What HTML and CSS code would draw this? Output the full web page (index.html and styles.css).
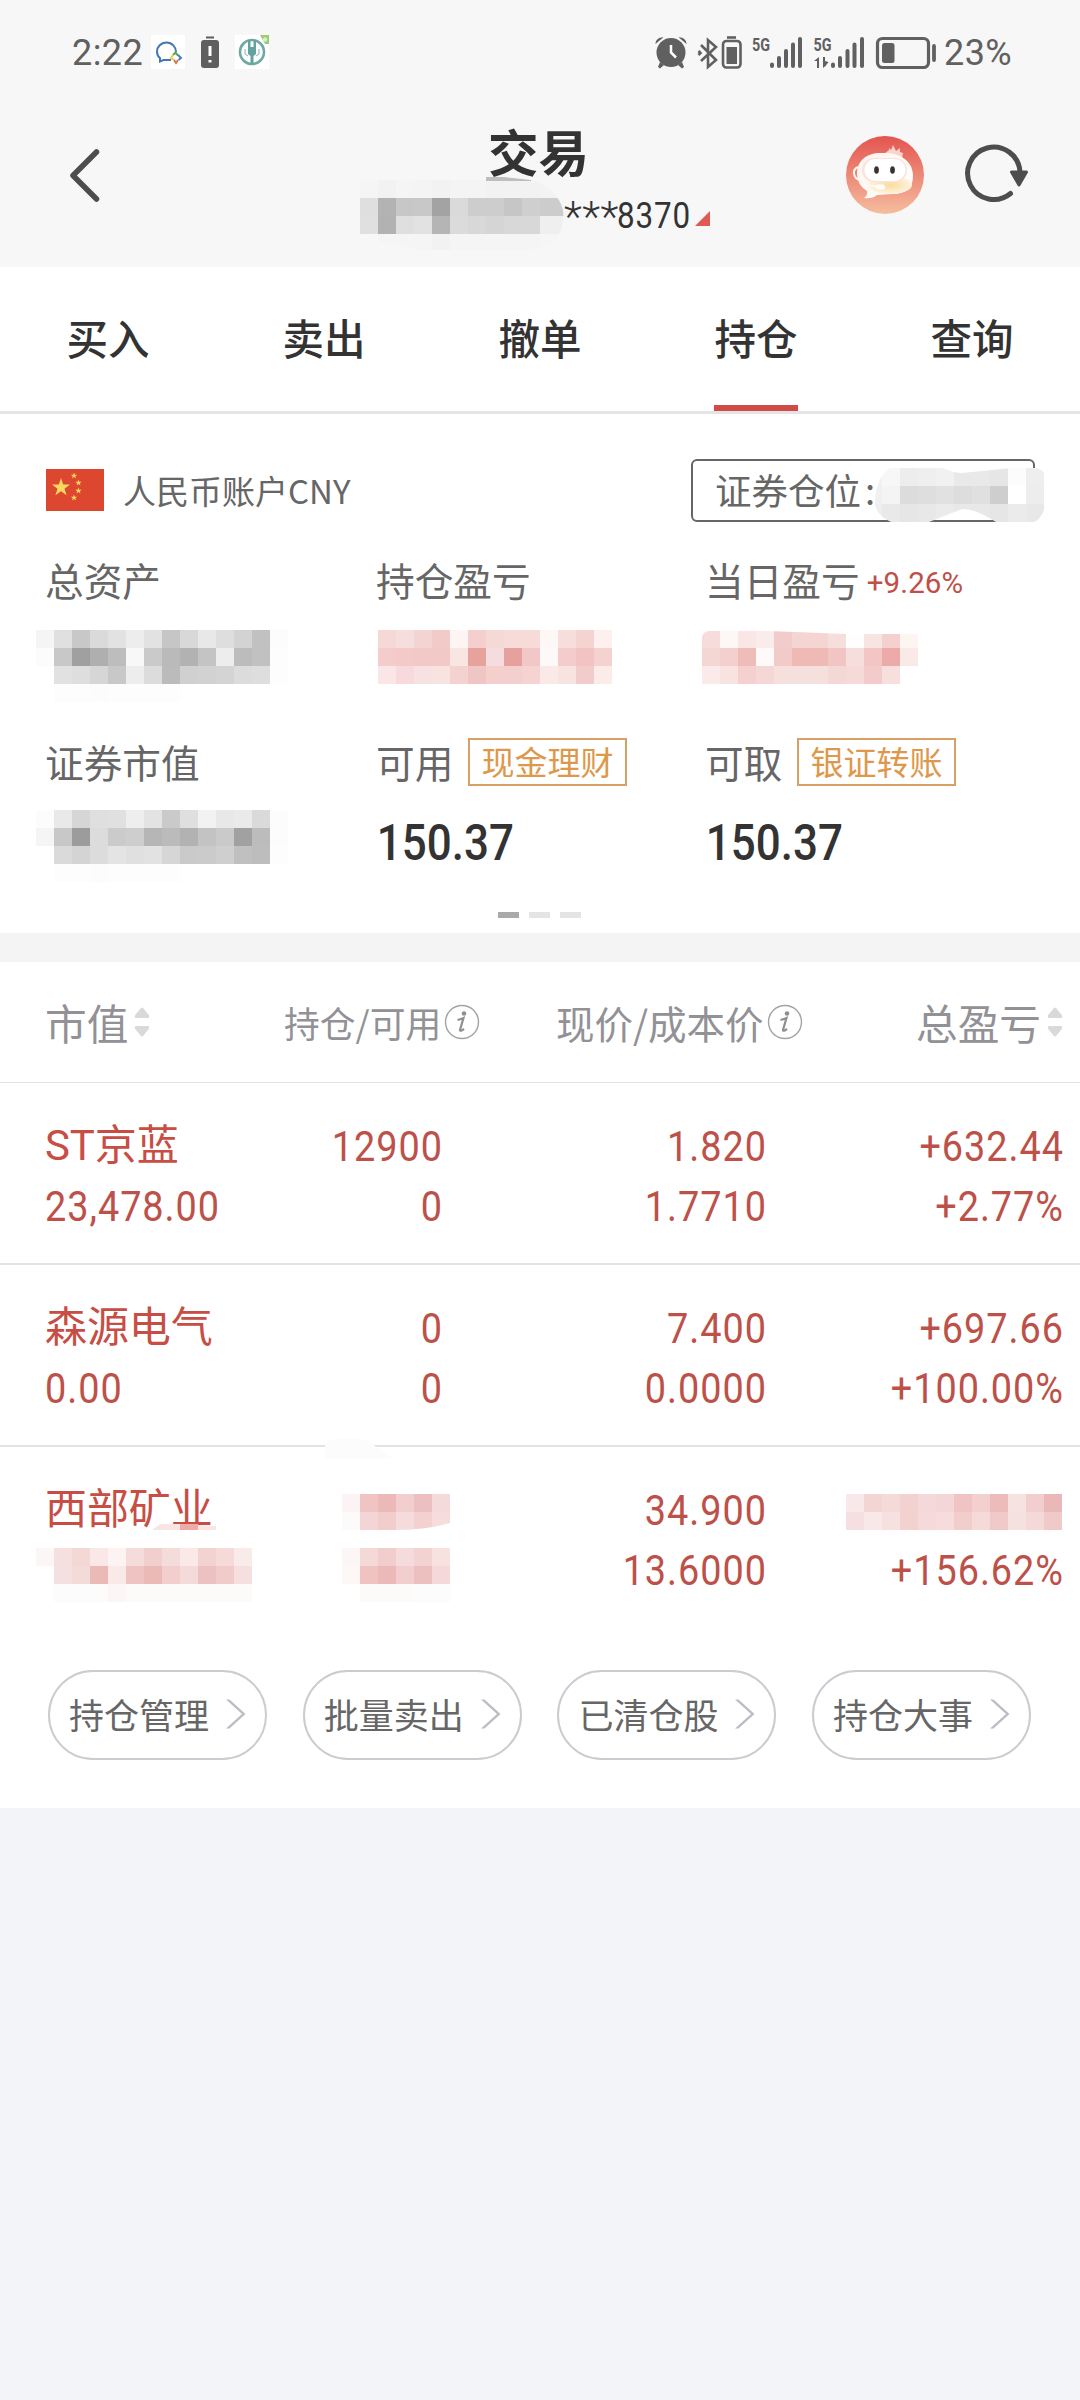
FILE: index.html
```html
<!DOCTYPE html>
<html lang="zh-CN">
<head>
<meta charset="utf-8">
<title>交易 - 持仓</title>
<link rel="stylesheet" href="styles.css">
</head>
<body>
<header class="top">
  <div class="status">
    <span class="clock">2:22</span>
    <svg class="notif-icons" width="120" height="36" viewBox="150 34 120 36" fill="none">
      <path fill="#fff" d="M151 35h34v34h-34zM235 35h34v34h-34z"/>
      <path d="M176 52c0-5-4-9.500-9.500-9.500S157 47 157 51.500c0 3 1 5 3 6.500v3.500l3.500-1.500h7.500" stroke="#4478b4" stroke-width="2"/>
      <path d="m173 55 2.500-2.500 2.500 3" stroke="#65a352" stroke-width="2"/>
      <path d="m178 55 3 3-2.500 2" stroke="#4280bd" stroke-width="2"/>
      <path d="m178 60-2 3-2-3" stroke="#d9764b" stroke-width="2"/>
      <path d="m174 60-3-2 2-3" stroke="#ecca5d" stroke-width="2"/>
      <path fill="#5f5f5f" d="M206 36.500h8v2h-8zM204 40h12a3 3 0 0 1 3 3v22a3 3 0 0 1-3 3h-12a3 3 0 0 1-3-3V43a3 3 0 0 1 3-3z"/>
      <path d="M210 46v10M210 60v2.500" stroke="#fff" stroke-width="3"/>
      <circle cx="252" cy="52" r="12" stroke="#6fa9a3" stroke-width="2.600"/>
      <path fill="#62a39d" d="M248 40h2.500v7h3v-7h2.500v14l-2.500 2v8h-3v-8l-2.500-2z"/>
      <path d="M245 49v5l3 2M259 49v5l-3 2" stroke="#7bb5ae"/>
      <path fill="#9fca77" d="M260 35h9v9h-4z"/>
      <circle cx="265" cy="39.500" r="2.200" fill="#d9efc5"/>
    </svg>
    <svg class="system-icons" width="284" height="36" viewBox="654 34 284 36" fill="none" stroke="#606060">
      <g stroke="none" fill="#606060">
        <circle cx="671" cy="52.500" r="14.500"/>
        <path d="M655.500 44c0-4 3-7 8-6.800zM686.500 44c0-4-3-7-8-6.800zM660 62l4 3-4 3.500-2-1.500zM682 62l-4 3 4 3.500 2-1.500z"/>
      </g>
      <path stroke="#fff" stroke-width="2.500" d="M671 45v7.500l5 5"/>
      <path stroke-width="2.600" d="m701 45 15 15-8 7V40l8 7-15 14M698.500 51l2 2-2 2"/>
      <path stroke-width="2.600" d="M727 37.500h9"/>
      <rect x="723" y="41" width="17.500" height="26.500" rx="3.500" stroke-width="2.600"/>
      <path stroke="none" fill="#606060" d="M726.500 47h10.500v17h-10.500z"/>
      <g stroke-width="4" stroke-linecap="round">
        <path d="M772 64.500v1.500M779 58v8M786 51v15M793 44.500v21.500M800 39v27"/>
        <path d="M833 64.500v1.500M840 58v8M847.500 51v15M854.500 44.500v21.500M862 39v27"/>
      </g>
      <path stroke="none" fill="#606060" d="M819 57v11h-2v-7h-3zM823 68V57h2v4l3.500 1-3 4z"/>
      <rect x="877.500" y="38.500" width="51" height="29" rx="5" stroke-width="3.200"/>
      <rect x="882" y="43" width="12.500" height="20" rx="2.500" stroke="none" fill="#606060"/>
      <path stroke-width="3.800" stroke-linecap="round" d="M934 46v14"/>
      <g class="net"><text x="752" y="51" textLength="18" lengthAdjust="spacingAndGlyphs">5G</text><text x="813.500" y="51" textLength="18" lengthAdjust="spacingAndGlyphs">5G</text></g>
    </svg>
    <span class="percent">23%</span>
  </div>
  <div class="appbar">
    <svg class="back" width="34" height="60" viewBox="0 0 34 60"><path d="M28.500 7 5 30.500 28.500 54" fill="none" stroke="#4d4d4d" stroke-width="5.500" stroke-linecap="round" stroke-linejoin="round"/></svg>
    <div class="title">
      <h1>交易</h1>
      <div class="account">
        <svg class="mosaic" data-clip="M0 0H172Q197 8 203 30Q205 48 194 62L170 70H60L0 58Z" data-rows="f5f5f5 f2f2f2 f5f5f5 f4f4f4 f2f2f2 f4f4f4 f4f4f4 f2f2f2 f2f2f2 f2f2f2 f3f3f3 f7f7f7|dfdfdf b3b3b3 c7c7c7 c8c8c8 a3a3a3 dadada cdcdcd cdcdcd c6c6c6 cfcfcf cccccc cccccc|e0e0e0 b2b2b2 dfdfdf e2e2e2 b5b5b5 dbdbdb d8d8d8 d5d5d5 d8d8d8 d8d8d8 efefef efefef|f8f8f8 f5f5f5 f5f5f5 f5f5f5 f2f2f2 f5f5f5 f5f5f5 f5f5f5 f5f5f5 f5f5f5 f6f6f6 f7f7f7"></svg>
        <span class="stars">***</span><span class="tail">8370</span>
        <svg width="15" height="15" class="corner"><path fill="#df5a54" d="M15 0v15H0z"/></svg>
      </div>
      <svg class="smudge" width="46" height="4"><path fill="#bdbdbd" d="M0 0h18l27 3v1H0z"/></svg>
    </div>
    <svg class="robot" width="78" height="78" viewBox="0 0 78 78">
      <defs>
        <linearGradient id="rb" x2="0" y2="1"><stop offset="0" stop-color="#e45450"/><stop offset="1" stop-color="#f5bd9e"/></linearGradient>
        <linearGradient id="rf" y2=".8"><stop offset="0" stop-color="#fff3ee"/><stop offset=".6" stop-color="#fffaf5"/><stop offset="1" stop-color="#fff"/></linearGradient>
        <radialGradient id="rg"><stop offset="0" stop-color="#f9dc9b"/><stop offset="1" stop-color="#fff3df"/></radialGradient>
      </defs>
      <circle cx="39" cy="39" r="39" fill="url(#rb)"/>
      <path fill="#fbd5cc" d="m38 18 5-4v-2l2 2 2-5 3 6 4-3v4l3 1-1 5z"/>
      <path fill="url(#rf)" d="M18 62q4-3 3-7-10-6-10-17c0-13 9-21 24-21 18-1 32 7 32 23 0 13-8 18-20 18l-16 1q-5 4-13 3z"/>
      <ellipse cx="44" cy="49" rx="22" ry="9" fill="url(#rg)"/>
      <rect x="16" y="22" width="45" height="24" rx="12" fill="#fbe2dc"/>
      <rect x="18.500" y="23" width="41" height="22" rx="11" fill="#fff"/>
      <ellipse cx="30.500" cy="34" rx="2.400" ry="3.800" fill="#383230"/><ellipse cx="46.500" cy="34" rx="2.400" ry="3.800" fill="#383230"/>
      <path d="M12 31c-7 3-4 12 2 13 7 5 11 6 19 7" fill="none" stroke="#fff6ef" stroke-width="2"/>
      <rect x="30" y="48.500" width="9" height="5" rx="2.500" fill="#fff"/>
    </svg>
    <svg class="refresh" width="66" height="60" viewBox="0 0 66 60"><path d="M46.500 49.500A26.200 26.200 0 1 1 56 28" fill="none" stroke="#4d4d4d" stroke-width="5" stroke-linecap="round"/><path d="M47.500 28h15l-7.500 13z" fill="#4d4d4d" stroke="#4d4d4d" stroke-width="3" stroke-linejoin="round"/></svg>
  </div>
</header>

<nav class="tabs">
  <a>买入</a><a>卖出</a><a>撤单</a><a class="active">持仓</a><a>查询</a>
</nav>

<section class="assets">
  <div class="account-row">
    <svg class="flag" width="58" height="42" viewBox="0 0 58 42"><path fill="#de472f" d="M0 0h58v42H0z"/><g fill="#fbd75e"><path d="m15 9 2.200 6.500h6.800l-5.500 4.200 2.100 6.600-5.600-4-5.600 4 2.100-6.600L6 15.500h6.800z"/><path id="s" d="m28 3.500.8 2.200h2.400l-1.900 1.500.7 2.300-2-1.400-2 1.400.7-2.300-1.900-1.500h2.400z"/><use href="#s" x="4.500" y="7"/><use href="#s" x="4.500" y="15"/><use href="#s" y="22"/></g></svg>
    <span class="currency">人民币账户CNY</span>
    <div class="position">证券仓位<span class="colon">:</span>
      <svg class="mosaic over" data-clip="M11 30Q13 14 20 5Q28-3 38-5Q58-7 72-3Q88 5 98 5L158-1Q176-2 180 5V42Q176 52 170 54H132Q112 41 98 41L65 54H27Q9 46 11 30Z" data-rows="f1f1f1 f7f7f7 ededed efefef f1f1f1 e9e9e9 e9e9e9 e6e6e6 fcfcfc eeeeee|f0f0f0 f4f4f4 dcdcdc dedede e1e1e1 dddddd e0e0e0 cecece ffffff ededed|eeeeee e9e9e9 e6e6e6 e8e8e8 ebebeb e8e8e8 e8e8e8 e6e6e6 ebebeb e8e8e8"></svg>
    </div>
  </div>
  <div class="stats">
    <div class="stat">
      <div class="label">总资产</div>
      <svg class="mosaic m-left" data-rows="f5f5f5 e0e0e0 c8c8c8 dadada e2e2e2 ededed e2e2e2 c6c6c6 d8d8d8 e8e8e8 dedede d3d3d3 c1c1c1 fcfcfc|fcfcfc c8c8c8 a0a0a0 afafaf bdbdbd f8f8f8 cacaca bababa b2b2b2 c4c4c4 ededed bcbcbc c1c1c1 fdfdfd|- e1e1e1 dedede d6d6d6 c8c8c8 ededed dcdcdc bbbbbb d0d0d0 d2d2d2 d4d4d4 dcdcdc dedede fdfdfd|- fdfdfd fdfdfd fcfcfc fdfdfd fdfdfd fdfdfd fdfdfd"></svg>
    </div>
    <div class="stat">
      <div class="label">持仓盈亏</div>
      <svg class="mosaic m-mid" data-rows="f6d8d6 f6dede f4d4d2 f2cac8 fdf5f4 f4cfce f5d9d7 f6dbd8 f6dbd8 fdf7f6 f8dddd f4d3d1 fdf0ef|f4cccb f3cac8 f2c9c6 f2c9c7 f9e6e3 e8a29d f5dddf e6a09d f2c7c8 fdf9f8 f3cccb f1c3c3 f4d2cf|fae6e7 f8dadd f8e2e1 f9e3e1 f4d2d0 f0c6c4 f4cfcc f3d0cd f5d3d1 f9e9e7 f8e3e1 f2cccb fbecea"></svg>
    </div>
    <div class="stat">
      <div class="label">当日盈亏<span class="pct">+9.26%</span></div>
      <svg class="mosaic m-right" data-clip="M0 6Q2 1 8 1H66L146 4H216V54H0Z" data-rows="f7dcdc fdf7f6 fae6e5 faecea f2cccb f5d5d2 f5d5d2 f6dedd fefefe f9e4e4 f4d1cf fdf5f2|f4d6d3 f3d0ce eebdb9 fefaf9 f2cac8 efb9b6 efb9b6 f1c5c3 f6dedd f3c5c5 ecaba9 f9e9e7|faeaea f9e3e1 f4d1cf f5d8d6 f6e0de f6e0de f6e0de f4d8d5 f5dad8 f3cbca f6dfdc -"></svg>
    </div>
    <div class="stat">
      <div class="label">证券市值</div>
      <svg class="mosaic m-left m-low" data-rows="fcfcfc e9e9e9 d6d6d6 dfdfdf e0e0e0 eeeeee e3e3e3 cacaca dfdfdf f2f2f2 e8e8e8 eaeaea dadada fcfcfc|f5f5f5 c8c8c8 9c9c9c dcdcdc cbcbcb cecece b6b6b6 bbbbbb b2b2b2 c3c3c3 cacaca a1a1a1 bcbcbc fcfcfc|- dadada d4d4d4 dcdcdc e4e4e4 e0e0e0 e2e2e2 d6d6d6 cacaca cbcbcb cfcfcf c0c0c0 bdbdbd fdfdfd|- fdfdfd fdfdfd fcfcfc fdfdfd fdfdfd fdfdfd fdfdfd"></svg>
    </div>
    <div class="stat">
      <div class="label">可用<span class="tag">现金理财</span></div>
      <div class="value">150.37</div>
    </div>
    <div class="stat">
      <div class="label">可取<span class="tag">银证转账</span></div>
      <div class="value">150.37</div>
    </div>
  </div>
  <div class="pager"><i class="on"></i><i></i><i></i></div>
</section>

<section class="holdings">
  <div class="head">
    <div class="h-big">市值<svg class="sort" width="16" height="30" viewBox="0 0 16 30"><path d="M7 1 1.200 8q-1.400 3 1.300 3h11q2.700 0 1.300-3L9 1q-1-1-2 0zM7 29l-5.800-7q-1.400-3 1.300-3h11q2.700 0 1.300 3L9 29q-1 1-2 0z" fill="#d9d9d9"/></svg></div>
    <div class="h-small">持仓/可用<svg class="info" width="36" height="36" viewBox="0 0 36 36"><circle cx="18" cy="18" r="16.500" fill="none" stroke="#a3a3a3" stroke-width="1.400"/><circle cx="20" cy="9.500" r="2.300" fill="#8f8f8f"/><path d="M13.500 16q4-1 6-2l-3.500 12q0 2 4-1.200" fill="none" stroke="#8f8f8f" stroke-width="2.200"/></svg></div>
    <div class="h-mid">现价/成本价<svg class="info" width="36" height="36" viewBox="0 0 36 36"><circle cx="18" cy="18" r="16.500" fill="none" stroke="#a3a3a3" stroke-width="1.400"/><circle cx="20" cy="9.500" r="2.300" fill="#8f8f8f"/><path d="M13.500 16q4-1 6-2l-3.500 12q0 2 4-1.200" fill="none" stroke="#8f8f8f" stroke-width="2.200"/></svg></div>
    <div class="h-big">总盈亏<svg class="sort" width="16" height="30" viewBox="0 0 16 30"><path d="M7 1 1.200 8q-1.400 3 1.300 3h11q2.700 0 1.300-3L9 1q-1-1-2 0zM7 29l-5.800-7q-1.400-3 1.300-3h11q2.700 0 1.300 3L9 29q-1 1-2 0z" fill="#d9d9d9"/></svg></div>
  </div>
  <div class="row">
    <span class="name">ST京蓝</span><span class="num">12900</span><span class="num">1.820</span><span class="num">+632.44</span>
    <span class="num">23,478.00</span><span class="num">0</span><span class="num">1.7710</span><span class="num">+2.77%</span>
  </div>
  <div class="row">
    <span class="name">森源电气</span><span class="num">0</span><span class="num">7.400</span><span class="num">+697.66</span>
    <span class="num">0.00</span><span class="num">0</span><span class="num">0.0000</span><span class="num">+100.00%</span>
  </div>
  <div class="row last">
    <span class="name">西部矿业</span>
    <span><svg class="mosaic m-qty" data-clip="M0 0H108V29Q85 36 50 36H0Z" data-rows="fcf4f4 f0c4c3 ecb9b9 f2cfce ecc0c0 f5dadb|fdfafa f4d5d5 f1cdcb f5dbdb f2d1d0 f6dcdc"></svg></span>
    <span class="num">34.900</span>
    <span><svg class="mosaic m-pl" data-rows="f9e8e9 f3d6d3 f5dada f3d1d1 f5d8da f5d6d8 efc4c3 f3cfcf ecbbba f6e2e0 f3cecf ebb8b8|f5dfe0 f9e8e8 f6e1e0 f2d1cf f6d9da f6dcdd f1cdcc f6dad9 f0cac9 f5e2e0 f5d9d9 efcac8"></svg></span>
    <span><svg class="mosaic m-val" data-rows="fdf6f6 f5dfdf f4d8d5 f9e8e7 fdf3f2 f5dbda f1cfcd f4dcdb fbe9e8 f3d3d1 f5dad9 f9ebe9|- f4e0e0 f3dbda ebbab7 f9eae8 efc3c1 ebbab7 f2cfcd f4dad9 edc1c1 f0cbca f5dfdf|- fdfcfc fdfcfc fdfcfb fdf6f6 fdfbfa fdfbfa fdfbfa fdfbfa fdfbfa fdfbfa fdfbfa"></svg></span>
    <span><svg class="mosaic m-qty2" data-rows="fdf6f6 f5d9d9 f1cdcd f5dbdb f3d3d2 f7e2e0|fdf7f6 f0c2c1 ebb9b7 f2cfce ecc0bf f5d9da|- fdfbfa fdfbfa fdfbfa fdfcfc fdfcfc"></svg></span>
    <span class="num">13.6000</span><span class="num">+156.62%</span>
    <svg class="veil" width="200" height="24" viewBox="325 1439 200 24"><path fill="#fcfcfc" d="M325 1458V1446q2-6 10-7h25q8 1 16 8l16 11z"/></svg>
    <svg class="fleck" width="66" height="6" viewBox="0 0 66 6"><path fill="#f9e6e4" d="M0 6 8 0h22l34 2v4z"/><path fill="#edaca7" d="M28 0h18v6H28z"/></svg>
  </div>
  <div class="actions">
    <a>持仓管理<svg width="22" height="32" viewBox="0 0 22 32"><path d="m1 1.500 3.500 0L20.500 16 4.500 30.500H1L17 16z"/></svg></a>
    <a>批量卖出<svg width="22" height="32" viewBox="0 0 22 32"><path d="m1 1.500 3.500 0L20.500 16 4.500 30.500H1L17 16z"/></svg></a>
    <a>已清仓股<svg width="22" height="32" viewBox="0 0 22 32"><path d="m1 1.500 3.500 0L20.500 16 4.500 30.500H1L17 16z"/></svg></a>
    <a>持仓大事<svg width="22" height="32" viewBox="0 0 22 32"><path d="m1 1.500 3.500 0L20.500 16 4.500 30.500H1L17 16z"/></svg></a>
  </div>
</section>
<script src="mosaic.js"></script>
</body>
</html>
```
FILE: styles.css
```css
* { box-sizing: border-box; }
body {
  margin: 0;
  width: 1080px;
  min-height: 2400px;
  background: #f3f4f9;
  color: #333;
  font-family: Roboto, "Noto Sans CJK SC", sans-serif;
}
svg { display: block; flex: none; }

.top { height: 267px; background: #f7f7f7; }
.status { display: flex; align-items: center; height: 104px; padding-left: 72px; color: #606060; font-size: 36px; line-height: 40px; }
.clock { width: 78px; padding-top: 1px; letter-spacing: .4px; }
.system-icons { margin-left: 384px; }
.percent { margin-left: 6px; padding-top: 1px; letter-spacing: .4px; }
.net text { font: 700 19px Roboto, sans-serif; fill: #606060; stroke: none; }

.appbar { display: flex; height: 163px; padding-left: 68px; }
.back { margin-top: 41px; }
.title { position: relative; width: 744px; }
.title h1 { margin: 17px 0 0 386px; font: 700 50.500px/58px "Noto Sans CJK SC", sans-serif; }
.account { display: flex; align-items: center; height: 62px; margin-top: 5px; padding-left: 258px; white-space: nowrap; }
.account .mosaic { margin-top: 2px; }
.stars { width: 53px; margin-left: -12px; font-size: 42px; font-weight: 300; letter-spacing: .4px; padding-top: 2px; }
.tail { width: 72px; font-size: 36.500px; letter-spacing: 1px; transform: scaleX(.86); transform-origin: left; }
.corner { margin: 7px 0 0 6px; }
.smudge { position: absolute; left: 384px; top: 73px; }
.robot { margin: 32px 0 0 0; }
.refresh { margin: 40px 0 0 40px; }

.tabs { display: grid; grid-template-columns: repeat(5, 1fr); height: 147px; background: #fff; border-bottom: 3px solid #e2e4e7; }
.tabs a { display: block; width: 84px; height: 144px; margin: 0 auto; font: 500 41.500px/140px "Noto Sans CJK SC", sans-serif; text-align: center; color: #333; }
.tabs .active { border-bottom: 6px solid #cf4b43; }

.assets { height: 519px; padding-top: 45px; background: #fff; color: #666; }
.account-row { display: flex; align-items: center; height: 63px; padding: 0 45px 0 46px; font-family: "Noto Sans CJK SC", sans-serif; }
.flag { margin-bottom: 2px; }
.currency { margin: 0 0 2px 19px; font-size: 33px; }
.position { position: relative; margin-left: auto; width: 344px; height: 63px; padding-left: 22px; border: 2px solid #666; border-radius: 6px; font-size: 36.500px; line-height: 58px; white-space: nowrap; }
.colon { margin-left: 4px; }
.over { position: absolute; left: 171px; top: 7px; }
.stats { display: grid; grid-template-columns: 331px 329px 375px; grid-auto-rows: 182px; height: 384px; padding: 29px 0 0 45px; }
.label { display: flex; align-items: center; height: 60px; padding-bottom: 3px; font: 38.700px/57px "Noto Sans CJK SC", sans-serif; }
.pct { margin: 7px 0 0 7px; font: 29.500px/40px Roboto, sans-serif; color: #c04f48; letter-spacing: .1px; }
.tag { height: 48px; margin-left: 15px; padding: 0 12px 0 11px; border: 2px solid #d9a066; font-size: 33px; line-height: 42px; color: #dd984c; }
.value { width: 180px; margin-top: 18px; padding-left: 1px; font-size: 50.500px; font-weight: 500; line-height: 64px; color: #333; transform: scaleX(.87); transform-origin: left; }
.m-left { margin: 19px 0 0 -9px; }
.m-low { margin-top: 17px; }
.m-mid { margin: 19px 0 0 2px; }
.m-right { margin: 19px 0 0 -3px; }
.pager { display: flex; gap: 10px; margin: 6px 0 0 498px; }
.pager i { width: 21px; height: 6px; background: #e4e4e4; }
.pager .on { background: #aaa; }

.holdings { height: 875px; background: #fff; border-top: 29px solid #f4f4f4; }
.head { display: grid; grid-template-columns: 239px 272px 360px 1fr; height: 121px; padding-left: 45px; border-bottom: 1px solid #e1e4e4; font-family: "Noto Sans CJK SC", sans-serif; color: #919196; }
.head div { display: flex; align-items: center; height: 119px; white-space: nowrap; }
.h-big { font-size: 41.700px; }
.h-small { font-size: 35.800px; }
.h-mid { font-size: 38.500px; }
.sort { margin: 0 0 0 6px; }
.info { margin: 0 0 0 3px; }
.row { position: relative; display: grid; grid-template-columns: 235px 163px 324px 297px; grid-auto-rows: 60px; height: 182px; padding: 33px 0 0 45px; border-bottom: 2px solid #e2e4e4; font-size: 42px; line-height: 60px; color: #bd5149; }
.row > span { text-align: right; white-space: nowrap; }
.row > span:nth-child(4n+1) { text-align: left; }
.row .num { padding-top: 1px; letter-spacing: 1.100px; transform: scaleX(.9); transform-origin: right; }
.row .num:nth-child(4n+1) { transform-origin: left; }
.row .name { letter-spacing: -.1px; color: #c74d45; }
.last { border: 0; height: 223px; }
.m-qty { margin: 14px 0 0 62px; }
.m-qty2 { margin: 8px 0 0 62px; }
.m-pl { margin: 14px 0 0 79px; }
.m-val { margin: 8px 0 0 -9px; }
.veil { position: absolute; left: 325px; top: -8px; }
.fleck { position: absolute; left: 152px; top: 77px; }
.actions { display: flex; gap: 35.700px; padding-left: 48px; }
.actions a { display: flex; align-items: center; width: 219px; height: 90px; padding: 0 0 2px 19px; border: 2px solid #cbcbd1; border-radius: 45px; font: 35px/80px "Noto Sans CJK SC", sans-serif; color: #666; }
.actions svg { margin-left: 16px; fill: #bcbcc4; }
```
FILE: mosaic.js
```js
// Draws the masked values: each svg.mosaic holds rows of hex colours, one per 18px cell.
const NS = 'http://www.w3.org/2000/svg';
const CELL = 18;
document.querySelectorAll('.mosaic').forEach((svg, n) => {
  const rows = svg.dataset.rows.split('|').map(r => r.split(' '));
  svg.setAttribute('width', Math.max(...rows.map(r => r.length)) * CELL);
  svg.setAttribute('height', rows.length * CELL);
  const group = document.createElementNS(NS, 'g');
  rows.forEach((row, y) => row.forEach((colour, x) => {
    if (colour === '-') return;
    const rect = document.createElementNS(NS, 'rect');
    rect.setAttribute('x', x * CELL);
    rect.setAttribute('y', y * CELL);
    rect.setAttribute('width', CELL);
    rect.setAttribute('height', CELL);
    rect.setAttribute('fill', '#' + colour);
    group.appendChild(rect);
  }));
  if (svg.dataset.clip) {
    const clip = document.createElementNS(NS, 'clipPath');
    clip.id = 'mask' + n;
    const path = document.createElementNS(NS, 'path');
    path.setAttribute('d', svg.dataset.clip);
    clip.appendChild(path);
    svg.appendChild(clip);
    group.setAttribute('clip-path', `url(#${clip.id})`);
  }
  svg.appendChild(group);
});
```
